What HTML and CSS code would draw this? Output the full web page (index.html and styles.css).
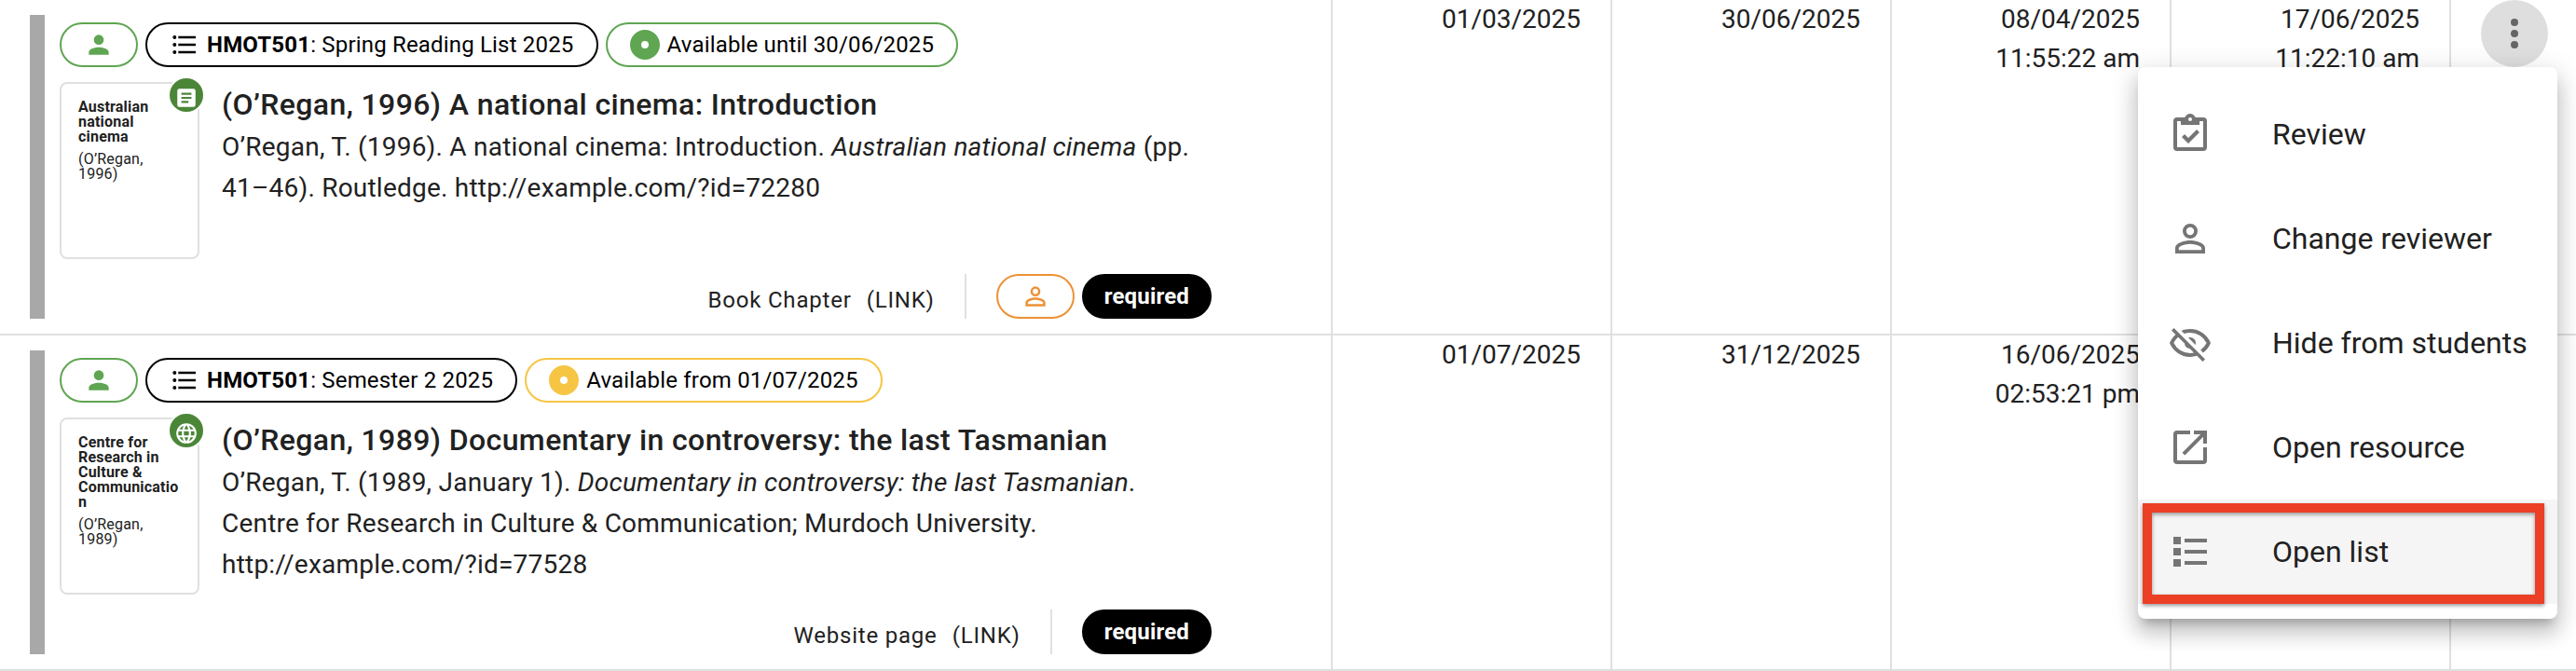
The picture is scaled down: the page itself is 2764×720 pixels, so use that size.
FILE: index.html
```html
<!DOCTYPE html>
<html lang="en">
<head>
	<meta charset="utf-8">
	<title>Reading list reviews</title>
	<link rel="stylesheet" href="styles.css">
</head>

<body>
	<!-- icons used more than once -->
	<svg class="sprite">
		<symbol id="person" viewBox="0 0 24 24"><path d="M12 4a4 4 0 1 1 0 8 4 4 0 0 1 0-8m0 10c4.420 0 8 1.790 8 4v2H4v-2c0-2.210 3.580-4 8-4z"/></symbol>
		<symbol id="person-outline" viewBox="0 0 24 24"><path d="M12 4a4 4 0 0 1 0 8 4 4 0 0 1 0-8m0 1.900a2.100 2.100 0 1 0 0 4.200 2.100 2.100 0 0 0 0-4.200M12 13c2.670 0 8 1.330 8 4v3H4v-3c0-2.670 5.330-4 8-4m0 1.900c-2.970 0-6.100 1.460-6.100 2.100v1.100h12.200V17c0-.640-3.130-2.100-6.100-2.100z"/></symbol>
		<symbol id="list" viewBox="0 0 24 24"><path d="M7 5h14v2H7V5m0 8v-2h14v2H7M4 4.500a1.500 1.500 0 1 1 0 3 1.500 1.500 0 0 1 0-3m0 6a1.500 1.500 0 1 1 0 3 1.500 1.500 0 0 1 0-3M7 19v-2h14v2H7m-3-2.500a1.500 1.500 0 1 1 0 3 1.500 1.500 0 0 1 0-3z"/></symbol>
	</svg>

	<div class="row">
		<div class="cell item">
			<div class="bar"></div>
			<div class="content">
				<div class="chips">
					<span class="chip green"><svg class="icon"><use href="#person"/></svg></span>
					<span class="chip"><svg class="icon"><use href="#list"/></svg><span><b>HMOT501</b>: Spring Reading List 2025</span></span>
					<span class="chip green"><i class="dot"></i><span>Available until 30/06/2025</span></span>
				</div>
				<div class="details">
					<div class="thumb">
						<b>Australian national cinema</b>
						<p>(O’Regan, 1996)</p>
						<span class="badge"><svg viewBox="0 0 24 24"><path d="M19 3H5a2 2 0 0 0-2 2v14a2 2 0 0 0 2 2h14a2 2 0 0 0 2-2V5a2 2 0 0 0-2-2m-5 14H7v-2h7v2m3-4H7v-2h10v2m0-4H7V7h10v2z"/></svg></span>
					</div>
					<div class="text">
						<h3>(O’Regan, 1996) A national cinema: Introduction</h3>
						<p>O’Regan, T. (1996). A national cinema: Introduction. <em>Australian national cinema</em> (pp.<br>41–46). Routledge. http://example.com/?id=72280</p>
					</div>
				</div>
				<div class="meta">
					<span class="type">Book Chapter</span>
					<span class="type">(LINK)</span>
					<i class="divider"></i>
					<span class="chip orange"><svg class="icon"><use href="#person-outline"/></svg></span>
					<span class="chip required">required</span>
				</div>
			</div>
		</div>
		<div class="cell date">01/03/2025</div>
		<div class="cell date">30/06/2025</div>
		<div class="cell date">08/04/2025<br>11:55:22 am</div>
		<div class="cell date">17/06/2025<br>11:22:10 am</div>
		<div class="cell actions">
			<button class="more"><svg viewBox="0 0 24 24"><path d="M12 16a2 2 0 1 1 0 4 2 2 0 0 1 0-4m0-6a2 2 0 1 1 0 4 2 2 0 0 1 0-4m0-6a2 2 0 1 1 0 4 2 2 0 0 1 0-4z"/></svg></button>
		</div>
	</div>

	<div class="row">
		<div class="cell item">
			<div class="bar"></div>
			<div class="content">
				<div class="chips">
					<span class="chip green"><svg class="icon"><use href="#person"/></svg></span>
					<span class="chip"><svg class="icon"><use href="#list"/></svg><span><b>HMOT501</b>: Semester 2 2025</span></span>
					<span class="chip yellow"><i class="dot"></i><span>Available from 01/07/2025</span></span>
				</div>
				<div class="details">
					<div class="thumb">
						<b>Centre for Research in Culture &amp; Communication</b>
						<p>(O’Regan, 1989)</p>
						<span class="badge"><svg viewBox="0 0 24 24"><path d="M16.360 14c.080-.660.140-1.320.140-2s-.060-1.340-.140-2h3.380c.160.640.260 1.310.260 2s-.100 1.360-.260 2m-5.150 5.560c.600-1.110 1.060-2.310 1.380-3.560h2.950a8.030 8.030 0 0 1-4.330 3.560M14.340 14H9.660c-.100-.660-.160-1.320-.160-2s.060-1.350.160-2h4.680c.090.650.160 1.320.160 2s-.070 1.340-.160 2M12 19.960c-.830-1.200-1.500-2.530-1.910-3.960h3.820c-.410 1.430-1.080 2.760-1.910 3.960M8 8H5.080A7.920 7.920 0 0 1 9.400 4.440C8.800 5.550 8.350 6.750 8 8m-2.920 8H8c.350 1.250.800 2.450 1.400 3.560A8 8 0 0 1 5.080 16m-.820-2C4.100 13.360 4 12.690 4 12s.100-1.360.260-2h3.380c-.080.660-.140 1.320-.140 2s.060 1.340.140 2M12 4.030c.830 1.200 1.500 2.540 1.910 3.970h-3.820c.410-1.430 1.080-2.770 1.910-3.970M18.920 8h-2.950a15.650 15.650 0 0 0-1.380-3.560c1.840.630 3.370 1.900 4.330 3.560M12 2C6.470 2 2 6.500 2 12a10 10 0 0 0 10 10 10 10 0 0 0 10-10A10 10 0 0 0 12 2z"/></svg></span>
					</div>
					<div class="text">
						<h3>(O’Regan, 1989) Documentary in controversy: the last Tasmanian</h3>
						<p>O’Regan, T. (1989, January 1). <em>Documentary in controversy: the last Tasmanian</em>.<br>Centre for Research in Culture &amp; Communication; Murdoch University.<br>http://example.com/?id=77528</p>
					</div>
				</div>
				<div class="meta">
					<span class="type">Website page</span>
					<span class="type">(LINK)</span>
					<i class="divider"></i>
					<span class="chip required">required</span>
				</div>
			</div>
		</div>
		<div class="cell date">01/07/2025</div>
		<div class="cell date">31/12/2025</div>
		<div class="cell date">16/06/2025<br>02:53:21 pm</div>
		<div class="cell date"></div>
		<div class="cell actions"></div>
	</div>

	<!-- Menu -->
	<div class="menu">
		<div class="option"><svg viewBox="0 0 24 24"><path d="M19 3h-4.180C14.400 1.840 13.300 1 12 1s-2.400.840-2.820 2H5a2 2 0 0 0-2 2v14a2 2 0 0 0 2 2h14a2 2 0 0 0 2-2V5a2 2 0 0 0-2-2m-7 0a1 1 0 1 1 0 2 1 1 0 0 1 0-2M7 7h10V5h2v14H5V5h2v2m.500 6.500L9 12l2 2 4.500-4.500L17 11l-6 6-3.500-3.500z"/></svg>Review</div>
		<div class="option"><svg><use href="#person-outline"/></svg>Change reviewer</div>
		<div class="option"><svg viewBox="0 0 24 24"><path d="M2 5.270 3.280 4 20 20.720 18.730 22l-3.080-3.080c-1.150.380-2.370.580-3.650.580-5 0-9.270-3.110-11-7.500.690-1.760 1.790-3.310 3.190-4.540L2 5.270M12 9a3 3 0 0 1 3 3c0 .350-.060.690-.170 1L11 9.170c.310-.110.650-.170 1-.170m0-4.500c5 0 9.270 3.110 11 7.500a11.790 11.790 0 0 1-4 5.190l-1.420-1.430A9.862 9.862 0 0 0 20.820 12 9.821 9.821 0 0 0 12 6.500c-1.090 0-2.160.180-3.160.500L7.300 5.470c1.440-.620 3.030-.970 4.700-.970M3.180 12A9.821 9.821 0 0 0 12 17.500c.690 0 1.370-.070 2-.210L11.720 15A3.064 3.064 0 0 1 9 12.280L5.600 8.870c-.990.850-1.820 1.910-2.420 3.130z"/></svg>Hide from students</div>
		<div class="option"><svg viewBox="0 0 24 24"><path d="M14 3v2h3.590l-9.830 9.830 1.410 1.410L19 6.410V10h2V3m-2 16H5V5h7V3H5a2 2 0 0 0-2 2v14a2 2 0 0 0 2 2h14a2 2 0 0 0 2-2v-7h-2v7z"/></svg>Open resource</div>
		<div class="option active"><svg viewBox="0 0 24 24"><path d="M9 5v2h12V5M9 19h12v-2H9m0-4h12v-2H9M3 8h4V4H3m0 16h4v-4H3m0-2h4v-4H3"/></svg>Open list<i class="highlight"></i></div>
	</div>
</body>
</html>
```

FILE: styles.css
```css
* {
	box-sizing: border-box;
}

body {
	margin: 0;
	width: 2764px;
	height: 720px;
	position: relative;
	overflow: hidden;
	background-color: #fff;
	color: #212121;
	font-family: Roboto, sans-serif;
	font-size: 28px;
}

p, h3 {
	margin: 0;
}

svg {
	display: block;
	fill: currentColor;
}

.sprite {
	display: none;
}

/* ---------- Table ---------- */
.row {
	display: grid;
	grid-template-columns: 1430px repeat(4, 300px) 1fr;
	height: 360px;
	border-bottom: 2px solid #e0e0e0;
}

.cell {
	border-right: 2px solid #e0e0e0;
}

.date {
	padding-right: 32px;
	line-height: 42px;
	text-align: right;
}

.actions {
	border: 0;
	padding-left: 32px;
}

.more {
	width: 72px;
	height: 72px;
	padding: 12px;
	border: 0;
	border-radius: 50%;
	background-color: #dedede;
	color: #666;
}

/* ---------- Item ---------- */
.item {
	display: flex;
	gap: 16px;
	padding: 16px 128px 16px 32px;
}

.bar {
	width: 16px;
	background-color: #a8a8a8;
}

.content {
	display: flex;
	flex-direction: column;
	flex: 1;
	padding-top: 8px;
}

.chips {
	display: flex;
	gap: 8px;
}

.chip {
	display: flex;
	align-items: center;
	gap: 8px;
	height: 48px;
	padding: 0 24px;
	border: 2px solid #000;
	border-radius: 24px;
	color: #000;
	font-size: 24px;
	letter-spacing: 0.18px;
	white-space: nowrap;
}

.icon {
	width: 32px;
	height: 32px;
}

.green {
	border-color: #5fa552;
}

.green .icon {
	color: #5fa552;
}

.yellow {
	border-color: #f6c544;
}

.orange {
	border-color: #ed9135;
	color: #ed9135;
}

.dot {
	width: 32px;
	height: 32px;
	border: 12px solid #5fa552;
	border-radius: 50%;
}

.yellow .dot {
	border-color: #f6c544;
}

.required {
	padding: 0 22px;
	background-color: #000;
	color: #fff;
	font-weight: bold;
}

.details {
	display: flex;
	gap: 24px;
	margin-top: 16px;
}

.thumb {
	position: relative;
	width: 150px;
	height: 190px;
	padding: 17px 18px;
	border: 2px solid #e0e0e0;
	border-radius: 8px;
	font-size: 16px;
	line-height: 16px;
	letter-spacing: 0.2px;
	overflow-wrap: break-word;
}

.thumb p {
	margin-top: 8px;
}

.badge {
	position: absolute;
	top: -8px;
	right: -8px;
	width: 40px;
	height: 40px;
	padding: 8px 5px 4px;
	border: 2px solid #fff;
	border-radius: 50%;
	background-color: #4b8638;
	color: #fff;
}

.badge svg {
	width: 26px;
	height: 26px;
}

.text h3 {
	font-size: 32px;
	font-weight: 500;
	line-height: 48px;
	letter-spacing: 0.39px;
}

.text p {
	line-height: 44px;
	letter-spacing: 0.22px;
}

.meta {
	display: flex;
	justify-content: flex-end;
	gap: 8px;
	height: 48px;
	margin-top: auto;
}

.type {
	margin-right: 8px;
	padding-top: 4px;
	font-size: 24px;
	line-height: 48px;
	letter-spacing: 0.8px;
}

.divider {
	width: 2px;
	margin: 0 24px 0 16px;
	background-color: #e0e0e0;
}

/* ---------- Menu ---------- */
.menu {
	position: absolute;
	top: 72px;
	left: 2294px;
	width: 450px;
	padding: 16px 0;
	border-radius: 8px;
	background-color: #fff;
	box-shadow: 0 10px 10px -6px rgba(0, 0, 0, 0.2), 0 16px 20px 2px rgba(0, 0, 0, 0.14), 0 6px 28px 4px rgba(0, 0, 0, 0.12);
}

.option {
	position: relative;
	display: flex;
	align-items: center;
	gap: 64px;
	height: 112px;
	padding-left: 32px;
	font-size: 32px;
	white-space: nowrap;
}

.option svg {
	width: 48px;
	height: 48px;
	color: #757575;
}

.active {
	background-color: #f5f5f5;
}

/* red frame round the hovered option */
.highlight {
	position: absolute;
	top: 4px;
	left: 5px;
	width: 431px;
	height: 108px;
	border: 10px solid #eb4026;
	box-shadow: 0 2px 4px rgba(0, 0, 0, 0.4), inset 0 2px 4px rgba(0, 0, 0, 0.4);
}
```
